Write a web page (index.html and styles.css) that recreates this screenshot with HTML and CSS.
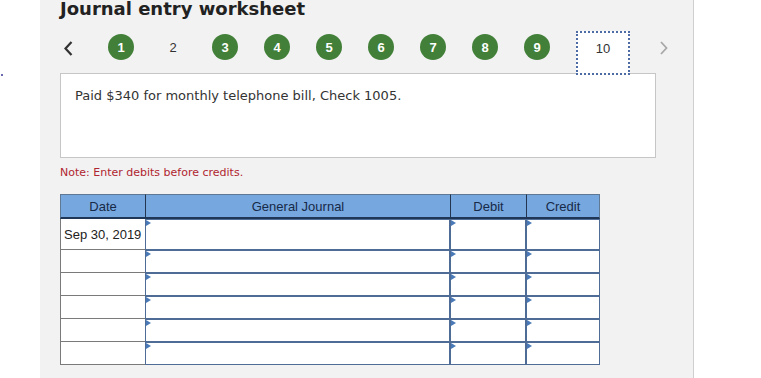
FILE: index.html
```html
<!DOCTYPE html>
<html>

<head>
  <title>Journal entry worksheet</title>
  <link rel="stylesheet" href="styles.css">
</head>

<body>
  <div class="page">
    <div class="gutter"><span class="dot"></span></div>

    <div class="panel">
      <h1 class="title">Journal entry worksheet</h1>

      <div class="steps">
        <span class="arrow prev">
          <svg width="9" height="15" viewBox="0 0 9 15"><polyline points="7.5,1 1.5,7.5 7.5,14" fill="none" stroke="#333" stroke-width="2.2"/></svg>
        </span>
        <span class="step done">1</span>
        <span class="step">2</span>
        <span class="step done">3</span>
        <span class="step done">4</span>
        <span class="step done">5</span>
        <span class="step done">6</span>
        <span class="step done">7</span>
        <span class="step done">8</span>
        <span class="step done">9</span>
        <span class="step current">10</span>
        <span class="arrow next">
          <svg width="8" height="14" viewBox="0 0 8 14"><polyline points="1,1 6.5,7 1,13" fill="none" stroke="#a8a8a8" stroke-width="1.8"/></svg>
        </span>
      </div>

      <div class="question">Paid $340 for monthly telephone bill, Check 1005.</div>

      <p class="note">Note: Enter debits before credits.</p>

      <div class="journal">
        <div class="head">Date</div>
        <div class="head">General Journal</div>
        <div class="head">Debit</div>
        <div class="head last">Credit</div>

        <div class="date">Sep 30, 2019</div>
        <div class="field"></div>
        <div class="field"></div>
        <div class="field"></div>

        <div class="date"></div>
        <div class="field"></div>
        <div class="field"></div>
        <div class="field"></div>

        <div class="date"></div>
        <div class="field"></div>
        <div class="field"></div>
        <div class="field"></div>

        <div class="date"></div>
        <div class="field"></div>
        <div class="field"></div>
        <div class="field"></div>

        <div class="date"></div>
        <div class="field"></div>
        <div class="field"></div>
        <div class="field"></div>

        <div class="date"></div>
        <div class="field"></div>
        <div class="field"></div>
        <div class="field"></div>
      </div>
    </div>
  </div>
</body>

</html>
```

FILE: styles.css
```css
/* Global styles */
body {
  margin: 0;
  background-color: #ffffff;
  font-family: 'DejaVu Sans', sans-serif;
  color: #333333;
  overflow: hidden;
}

.page {
  display: flex;
  height: 378px;
}

.gutter {
  width: 40px;
}

.dot {
  display: block;
  width: 2px;
  height: 2px;
  margin: 74px 0 0 1px;
  background-color: #6a6ab0;
}

/* Gray worksheet panel */
.panel {
  width: 633px;
  padding-left: 20px;
  background-color: #f2f2f2;
  border-right: 1px solid #cfcfcf;
}

.title {
  margin: 0;
  font-size: 18px;
  line-height: 17px;
  font-weight: bold;
  color: #222222;
}

/* Step navigation */
.steps {
  display: flex;
  align-items: flex-start;
  gap: 26px;
  height: 42px;
  margin-top: 14px;
  font-family: 'Liberation Sans', Arial, sans-serif;
  font-size: 13px;
}

.arrow {
  display: flex;
  align-items: center;
  justify-content: center;
  width: 16px;
  height: 26px;
  margin-top: 4px;
}

.arrow.prev {
  margin-right: 6px;
}

.step {
  width: 26px;
  height: 26px;
  margin-top: 3px;
  border-radius: 50%;
  line-height: 27px;
  text-align: center;
  color: #333333;
}

.step.done {
  background-color: #427f38;
  color: #ffffff;
  font-weight: bold;
}

.step.current {
  position: relative;
  z-index: 1;
  width: 54px;
  height: 44px;
  margin-top: 0;
  box-sizing: border-box;
  border: 2px dotted #4d6ca6;
  border-radius: 0;
  background-color: #ffffff;
  line-height: 32px;
}

/* Question text */
.question {
  width: 596px;
  height: 85px;
  box-sizing: border-box;
  padding: 14px 14px;
  background-color: #ffffff;
  border: 1px solid #c6c6c6;
  font-size: 13px;
  line-height: 16px;
}

.note {
  margin: 8px 0 0;
  font-size: 11px;
  line-height: 14px;
  color: #b0252f;
}

/* Journal grid */
.journal {
  display: grid;
  grid-template-columns: 85px 305px 76px 74px;
  grid-template-rows: 25px 31px repeat(5, 23px);
  width: 540px;
  margin-top: 14px;
  font-family: 'Liberation Sans', Arial, sans-serif;
  font-size: 13px;
}

.head {
  display: flex;
  align-items: center;
  justify-content: center;
  background-color: #76a7df;
  color: #172a47;
  border-top: 1px solid #5f7894;
  border-left: 1px solid #22364f;
  border-bottom: 2px solid #1f3656;
}

.head:first-child {
  border-left-color: #5f7894;
}

.head.last {
  border-right: 1px solid #5f7894;
}

.date {
  display: flex;
  align-items: center;
  padding-left: 3px;
  background-color: #ffffff;
  border-left: 1px solid #7a7a7a;
  border-bottom: 1px solid #7a7a7a;
  color: #222222;
}

.field {
  position: relative;
  background-color: #ffffff;
  border: 1px solid #4f6c96;
}

.field::before {
  content: '';
  position: absolute;
  top: 0;
  left: 0;
  border-left: 5px solid #4a79b7;
  border-top: 3px solid transparent;
  border-bottom: 3px solid transparent;
}
```
